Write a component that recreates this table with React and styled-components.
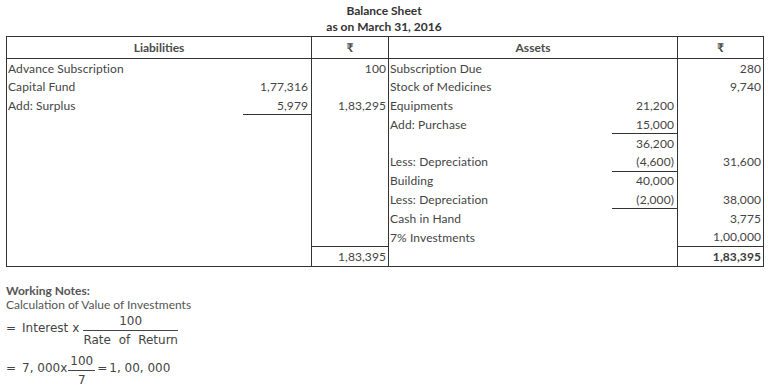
import React from "react";
import styled, { createGlobalStyle } from "styled-components";

const GlobalStyle = createGlobalStyle`
  body {
    margin: 0;
    background: #fff;
    font-family: Lato, "Open Sans", sans-serif;
    color: #444;
  }
`;

const liabilities = [
  ["Advance Subscription", "", "100"],
  ["Capital Fund", "1,77,316", ""],
  ["Add: Surplus", "5,979", "1,83,295", true],
];

const assets = [
  ["Subscription Due", "", "280"],
  ["Stock of Medicines", "", "9,740"],
  ["Equipments", "21,200", ""],
  ["Add: Purchase", "15,000", "", true],
  ["", "36,200", ""],
  ["Less: Depreciation", "(4,600)", "31,600", true],
  ["Building", "40,000", ""],
  ["Less: Depreciation", "(2,000)", "38,000", true],
  ["Cash in Hand", "", "3,775"],
  ["7% Investments", "", "1,00,000"],
];

export default function App() {
  return (
    <Page>
      <GlobalStyle />
      <Title>
        <div>Balance Sheet</div>
        <div>as on March 31, 2016</div>
      </Title>
      <Sheet>
        <colgroup>
          <col style={{ width: 236 }} />
          <col style={{ width: 69 }} />
          <col style={{ width: 77 }} />
          <col style={{ width: 223 }} />
          <col style={{ width: 66 }} />
          <col style={{ width: 86 }} />
        </colgroup>
        <thead>
          <tr>
            <Head colSpan={2}>Liabilities</Head>
            <Head $boxed>₹</Head>
            <Head colSpan={2}>Assets</Head>
            <Head $boxed>₹</Head>
          </tr>
        </thead>
        <tbody>
          {assets.map((a, i) => {
            const l = liabilities[i] || ["", "", ""];
            return (
              <Row key={i}>
                <Label>{l[0]}</Label>
                <Inner $under={l[3]}>{l[1]}</Inner>
                <Amount>{l[2]}</Amount>
                <Label>{a[0]}</Label>
                <Inner $under={a[3]}>{a[1]}</Inner>
                <Amount>{a[2]}</Amount>
              </Row>
            );
          })}
          <TotalRow>
            <Label />
            <Inner />
            <Amount $total>1,83,395</Amount>
            <Label />
            <Inner />
            <Amount $total $strong>1,83,395</Amount>
          </TotalRow>
        </tbody>
      </Sheet>

      <Notes>
        <NoteHead>Working Notes:</NoteHead>
        <NoteLine>Calculation of Value of Investments</NoteLine>
        <Formula>
          <Eq>=</Eq>
          <Term>Interest</Term>
          <Times>x</Times>
          <Fraction $wide>
            <span>100</span>
            <span>Rate of Return</span>
          </Fraction>
        </Formula>
        <Formula $second>
          <Eq>=</Eq>
          <Term>7, 000</Term>
          <Times $close>x</Times>
          <Fraction>
            <span>100</span>
            <span>7</span>
          </Fraction>
          <Eq $close>=</Eq>
          <Term>1, 00, 000</Term>
        </Formula>
      </Notes>
    </Page>
  );
}

const Page = styled.div`
  width: 768px;
  height: 388px;
  overflow: hidden;
  font-size: 12px;
`;

const Title = styled.div`
  padding-top: 3px;
  text-align: center;
  font-weight: 700;
  color: #333;
  line-height: 16px;
  height: 33px;
`;

const Sheet = styled.table`
  margin-left: 6px;
  width: 757px;
  table-layout: fixed;
  border-collapse: collapse;
  border: 1px solid #333;
  font-size: 12px;
`;

const Head = styled.th`
  height: 21px;
  padding: 0;
  font-weight: 700;
  color: #4a4a4a;
  text-align: center;
  border-bottom: 1px solid #333;
  border-left: ${(p) => (p.$boxed ? "1px solid #333" : "none")};
  border-right: ${(p) => (p.$boxed ? "1px solid #333" : "none")};
`;

const Row = styled.tr`
  height: 18.8px;
`;

const TotalRow = styled.tr`
  height: 20px;
`;

const Cell = styled.td`
  padding: 0 2px 0 1px;
  line-height: 15px;
  white-space: nowrap;
  vertical-align: middle;
  letter-spacing: 0.1px;
`;

const Label = styled(Cell)`
  text-align: left;
`;

const Inner = styled(Cell)`
  text-align: right;
  padding-right: 3px;
  border-bottom: ${(p) => (p.$under ? "1px solid #333" : "none")};
`;

const Amount = styled(Cell)`
  text-align: right;
  border-left: 1px solid #333;
  border-right: 1px solid #333;
  border-top: ${(p) => (p.$total ? "1px solid #333" : "none")};
  font-weight: ${(p) => (p.$strong ? 700 : 400)};
  color: ${(p) => (p.$strong ? "#3a3a3a" : "#444")};
`;

const Notes = styled.div`
  margin-top: 17px;
  padding-left: 6px;
  color: #555;
`;

const NoteHead = styled.div`
  font-weight: 700;
  line-height: 14px;
`;

const NoteLine = styled.div`
  line-height: 14px;
`;

const Formula = styled.div`
  display: flex;
  align-items: center;
  margin-top: ${(p) => (p.$second ? "7px" : "2px")};
  font-family: "DejaVu Sans", Verdana, sans-serif;
  font-size: 12px;
  color: #444;
`;

const Eq = styled.span`
  margin: 0 ${(p) => (p.$close ? "2px" : "6px")} 0 ${(p) => (p.$close ? "2px" : "0")};
  position: relative;
  top: -2px;
`;

const Term = styled.span`
  position: relative;
  top: -2px;
`;

const Times = styled.span`
  margin: 0 ${(p) => (p.$close ? "1px" : "4px")} 0 ${(p) => (p.$close ? "0" : "4px")};
  position: relative;
  top: -2px;
`;

const Fraction = styled.span`
  display: inline-flex;
  flex-direction: column;
  align-items: center;
  line-height: 14px;

  span:first-child {
    border-bottom: 1px solid #444;
    padding: 0 ${(p) => (p.$wide ? "0" : "2px")} 2px;
    align-self: stretch;
    text-align: center;
  }
  span:last-child {
    padding-top: 2px;
    word-spacing: ${(p) => (p.$wide ? "4px" : "0")};
  }
`;
